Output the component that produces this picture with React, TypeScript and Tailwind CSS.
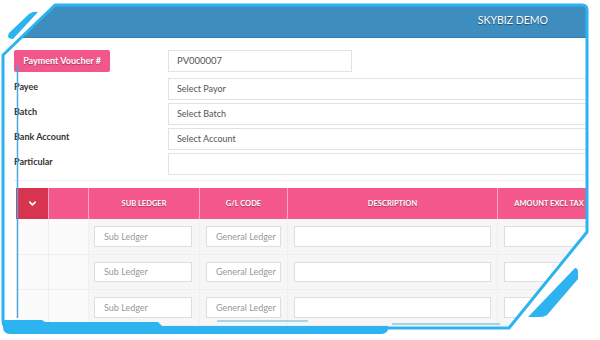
import { ChevronDown } from "lucide-react";

const fields = [
  { label: "Payee", value: "Select Payor" },
  { label: "Batch", value: "Select Batch" },
  { label: "Bank Account", value: "Select Account" },
  { label: "Particular", value: "" },
];

const columns = ["", "", "Sub Ledger", "G/L Code", "Description", "Amount Excl Tax"];

function Frame() {
  return (
    <svg
      className="pointer-events-none absolute inset-0"
      width="600"
      height="340"
      viewBox="0 0 600 340"
    >
      <path
        d="M55 5 H582 Q587 5 587 10 V232 L509 328 H10 Q3 328 3 321 V55 Z"
        fill="none"
        stroke="#2cb3f0"
        strokeWidth="3"
        strokeLinejoin="round"
      />
      <path d="M9 33 L29 14 Q33 11 38 12 L13 39 Q8 39 8 36 Z" fill="#2cb3f0" />
      <path
        d="M575 268 Q578 268 578 272 V279 L547 315 Q544 317 540 317 H528 Z"
        fill="#2cb3f0"
      />
      <path
        d="M3 320 H42 L45 322 H158 L162 326 H388 V330 Q386 334 381 334 H10 Q3 334 3 327 Z"
        fill="#2cb3f0"
      />
      <line x1="17.5" y1="65" x2="17.5" y2="318" stroke="#4aa7dc" strokeWidth="1.5" />
      <line x1="217" y1="321" x2="308" y2="321" stroke="#5ab0dd" strokeWidth="1" />
      <line x1="392" y1="324" x2="500" y2="324" stroke="#5ab0dd" strokeWidth="1" />
    </svg>
  );
}

export default function App() {
  return (
    <div className="relative h-[340px] w-[600px] overflow-hidden bg-white font-['Lato',sans-serif]">
      <div className="flex h-full w-full flex-col [clip-path:polygon(55px_5px,586px_5px,586px_232px,509px_328px,4px_328px,4px_55px)]">
        <div className="mt-[5px] flex h-[33px] items-center justify-end border-b border-[#3380b2] bg-[#3d8dbf] pr-[52px]">
          <span className="text-[10.5px] text-white [text-shadow:0_1px_1px_rgba(0,0,0,0.45)]">
            SKYBIZ DEMO
          </span>
        </div>

        <div className="pl-[14px] pt-[12px]">
          <div className="flex h-[22px]">
            <div className="w-[154px]">
              <div className="flex h-[22px] w-[96px] items-center justify-center rounded-[2px] bg-[#f2568b] text-[9px] font-bold text-white [text-shadow:0_1px_1px_rgba(0,0,0,0.35)]">
                Payment Voucher #
              </div>
            </div>
            <div className="flex w-[184px] items-center border border-[#e2e2e2] pl-[8px] text-[9.5px] text-[#555]">
              PV000007
            </div>
          </div>

          {fields.map((f, i) => (
            <div
              key={f.label}
              className={i === 0 ? "mt-[6px] flex h-[22px]" : "mt-[3px] flex h-[22px]"}
            >
              <div className="w-[154px] pt-[2px] text-[9px] font-bold text-[#333]">
                {f.label}
              </div>
              <div className="flex flex-1 items-center border border-[#e2e2e2] pl-[8px] text-[9px] text-[#555]">
                {f.value}
              </div>
            </div>
          ))}
        </div>

        <div className="mx-[14px] mt-[5px] border-t border-dotted border-[#e6e6e6]" />

        <div className="ml-[16px] mt-[7px]">
          <div className="grid h-[31px] grid-cols-[32px_40px_111px_88px_210px_1fr]">
            {columns.map((c, i) => (
              <div
                key={i}
                className={
                  i === 0
                    ? "flex items-center justify-center bg-[#d7344f] text-white"
                    : "flex items-center justify-center border-l border-[#f9a9c4] bg-[#f4588c] text-[7.5px] font-bold uppercase text-white [text-shadow:0_1px_1px_rgba(0,0,0,0.35)]"
                }
              >
                {i === 0 ? <ChevronDown size={11} strokeWidth={3.5} /> : c}
              </div>
            ))}
          </div>

          {[0, 1, 2].map((r) => (
            <div
              key={r}
              className="grid h-[35.5px] grid-cols-[32px_40px_111px_88px_210px_1fr] border-b border-[#efefef]"
            >
              <div className="bg-[#fbfbfb]" />
              <div className="border-l border-[#efefef] bg-[#fbfbfb]" />
              <div className="border-l border-[#efefef] bg-[#f6f6f6] py-[7px] pl-[5px] pr-[7px]">
                <div className="flex h-full items-center border border-[#dedede] bg-white pl-[9px] text-[9px] text-[#999]">
                  Sub Ledger
                </div>
              </div>
              <div className="border-l border-[#efefef] bg-[#f6f6f6] px-[6px] py-[7px]">
                <div className="flex h-full items-center border border-[#dedede] bg-white pl-[9px] text-[9px] text-[#999]">
                  General Ledger
                </div>
              </div>
              <div className="border-l border-[#efefef] bg-[#f6f6f6] px-[6px] py-[7px]">
                <div className="h-full border border-[#dedede] bg-white" />
              </div>
              <div className="border-l border-[#efefef] bg-[#f6f6f6] px-[6px] py-[7px]">
                <div className="h-full border border-[#dedede] bg-white" />
              </div>
            </div>
          ))}
        </div>
      </div>
      <Frame />
    </div>
  );
}
